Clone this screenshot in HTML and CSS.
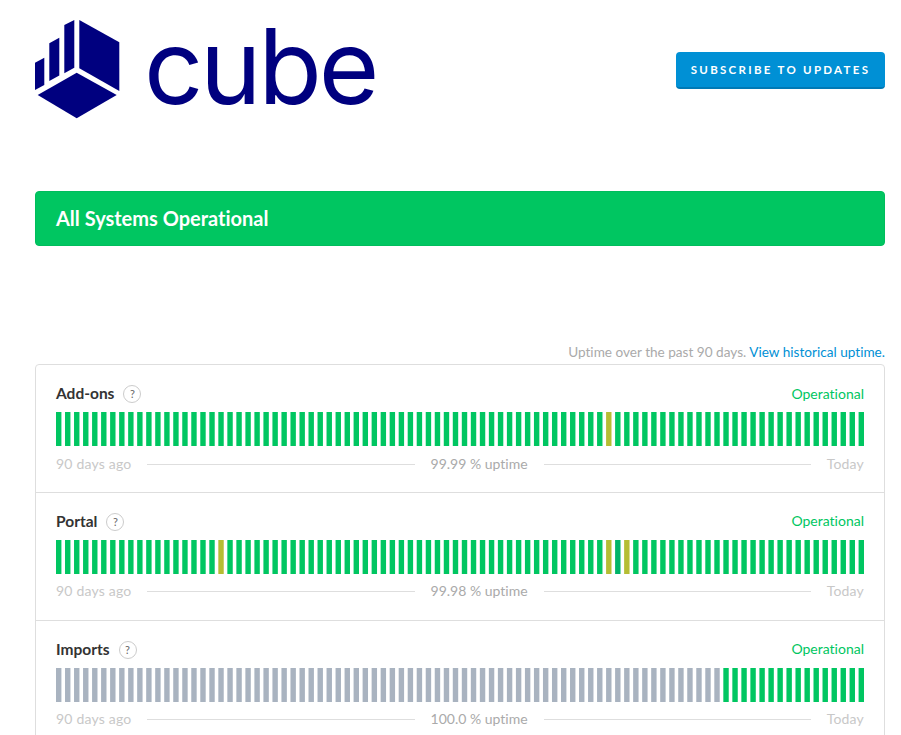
FILE: index.html
```html
<!DOCTYPE html>
<html>
<head>
  <meta charset="utf-8">
  <title>Cube Status</title>
  <link rel="stylesheet" href="styles.css">
</head>
<body>
  <div class="container">
    <div class="header">
      <div class="logo">
        <svg class="logo-mark" viewBox="0 0 85 99" width="85" height="99">
          <polygon points="44.3,0 84.3,22.3 84.3,71 44.3,48.3"/>
          <polygon points="41.7,52.7 81.7,75 41.7,98.3 2.7,75"/>
          <polygon points="29.3,5 39.3,0 39.3,47.7 29.3,53.3"/>
          <polygon points="14.3,23.3 24.3,17.7 24.3,55.5 14.3,61"/>
          <polygon points="0,42.7 9.3,37.7 9.3,65 0,70"/>
        </svg>
        <span class="logo-text">cube</span>
      </div>
      <button class="btn-subscribe">Subscribe to Updates</button>
    </div>

    <div class="banner">All Systems Operational</div>

    <div class="uptime-note">
      Uptime over the past 90 days. <a href="#">View historical uptime.</a>
    </div>

    <div class="components">
      <div class="component" data-grey="0" data-yellow="61">
        <div class="component-head">
          <span class="name">Add-ons</span>
          <span class="help">?</span>
          <span class="state">Operational</span>
        </div>
        <svg class="bars" viewBox="0 0 448 34" preserveAspectRatio="none"></svg>
        <div class="legend">
          <span>90 days ago</span>
          <span class="rule"></span>
          <span class="uptime">99.99 % uptime</span>
          <span class="rule"></span>
          <span>Today</span>
        </div>
      </div>

      <div class="component" data-grey="0" data-yellow="18,61,63" data-dark="62">
        <div class="component-head">
          <span class="name">Portal</span>
          <span class="help">?</span>
          <span class="state">Operational</span>
        </div>
        <svg class="bars" viewBox="0 0 448 34" preserveAspectRatio="none"></svg>
        <div class="legend">
          <span>90 days ago</span>
          <span class="rule"></span>
          <span class="uptime">99.98 % uptime</span>
          <span class="rule"></span>
          <span>Today</span>
        </div>
      </div>

      <div class="component" data-grey="74" data-yellow="">
        <div class="component-head">
          <span class="name">Imports</span>
          <span class="help">?</span>
          <span class="state">Operational</span>
        </div>
        <svg class="bars" viewBox="0 0 448 34" preserveAspectRatio="none"></svg>
        <div class="legend">
          <span>90 days ago</span>
          <span class="rule"></span>
          <span class="uptime">100.0 % uptime</span>
          <span class="rule"></span>
          <span>Today</span>
        </div>
      </div>
    </div>
  </div>

  <script>
    // Draw the 90 daily bars of each component
    var components = document.querySelectorAll('.component');

    for (var c = 0; c < components.length; c++) {
      var data = components[c].dataset;
      var yellow = data.yellow ? data.yellow.split(',') : [];
      var dark = data.dark ? data.dark.split(',') : [];
      var svg = components[c].querySelector('.bars');

      for (var i = 0; i < 90; i++) {
        var rect = document.createElementNS('http://www.w3.org/2000/svg', 'rect');
        var type = 'ok';
        if (i < Number(data.grey)) type = 'none';
        if (yellow.indexOf(String(i)) !== -1) type = 'minor';
        if (dark.indexOf(String(i)) !== -1) type = 'dark';
        rect.setAttribute('x', i * 5);
        rect.setAttribute('y', 0);
        rect.setAttribute('width', 3);
        rect.setAttribute('height', 34);
        rect.setAttribute('class', 'bar-' + type);
        svg.appendChild(rect);
      }
    }
  </script>
</body>
</html>
```

FILE: styles.css
```css
html, body {
  height: 735px;
  overflow: hidden;
}

body {
  font-family: Lato, "Open Sans", sans-serif;
  font-variant-ligatures: none;
  margin: 0;
  background: #fff;
  color: #333;
}

.container {
  width: 850px;
  margin-left: 35px;
}

.header {
  display: flex;
  justify-content: space-between;
  align-items: flex-start;
  height: 191px;
  padding-top: 20px;
  box-sizing: border-box;
}

.logo {
  display: flex;
  align-items: flex-start;
}

.logo-mark {
  fill: #00007f;
  flex: none;
}

.logo-text {
  font-family: Inter, sans-serif;
  font-size: 104px;
  font-weight: 400;
  line-height: 99px;
  letter-spacing: -3.3px;
  color: #00007f;
  margin-left: 24px;
  margin-top: -3px;
}

.btn-subscribe {
  width: 209px;
  height: 37px;
  margin-top: 32px;
  padding: 0;
  border: none;
  border-bottom: 2px solid #0079b5;
  border-radius: 4px;
  background: #0090d5;
  color: #fff;
  font-family: Lato, sans-serif;
  font-size: 11.5px;
  font-weight: 700;
  letter-spacing: 2.3px;
  text-transform: uppercase;
}

.banner {
  height: 55px;
  padding: 0 20px;
  box-sizing: border-box;
  border: 1px solid #00bd5c;
  border-radius: 4px;
  background: #00c661;
  color: #fff;
  font-size: 20px;
  font-weight: 700;
  line-height: 53px;
}

.uptime-note {
  margin-top: 96px;
  height: 22px;
  line-height: 21px;
  text-align: right;
  font-size: 13.6px;
  color: #aaa;
}

.uptime-note a {
  color: #0090d5;
  text-decoration: none;
}

.components {
  border: 1px solid #dedede;
  border-radius: 4px;
}

.component {
  height: 127.8px;
  box-sizing: border-box;
  padding: 20px 20px 0;
  border-bottom: 1px solid #dedede;
}

.component-head {
  display: flex;
  align-items: center;
  height: 16px;
  margin-bottom: 11px;
}

.name {
  font-size: 15.5px;
  font-weight: 700;
  color: #333;
}

.help {
  width: 16px;
  height: 16px;
  margin-left: 9px;
  margin-top: 2px;
  border: 1px solid #ccc;
  border-radius: 50%;
  font-size: 11px;
  line-height: 16px;
  text-align: center;
  color: #666;
}

.state {
  margin-left: auto;
  font-size: 14px;
  color: #00c661;
}

.bars {
  display: block;
  width: 808px;
  height: 34px;
}

.bar-ok {
  fill: #00c661;
}

.bar-none {
  fill: #a9b3c0;
}

.bar-minor {
  fill: #b5bd33;
}

.bar-dark {
  fill: #00b468;
}

.legend {
  display: flex;
  align-items: center;
  height: 20px;
  margin-top: 8px;
  font-size: 14px;
  letter-spacing: 0.2px;
  color: #c8c8c8;
}

.legend span {
  padding-bottom: 2px;
}

.legend .rule {
  flex: 1;
  height: 1px;
  margin: 0 16px;
  padding: 0;
  background: #dedede;
}

.legend .uptime {
  letter-spacing: 0;
  color: #aaa;
}
```
